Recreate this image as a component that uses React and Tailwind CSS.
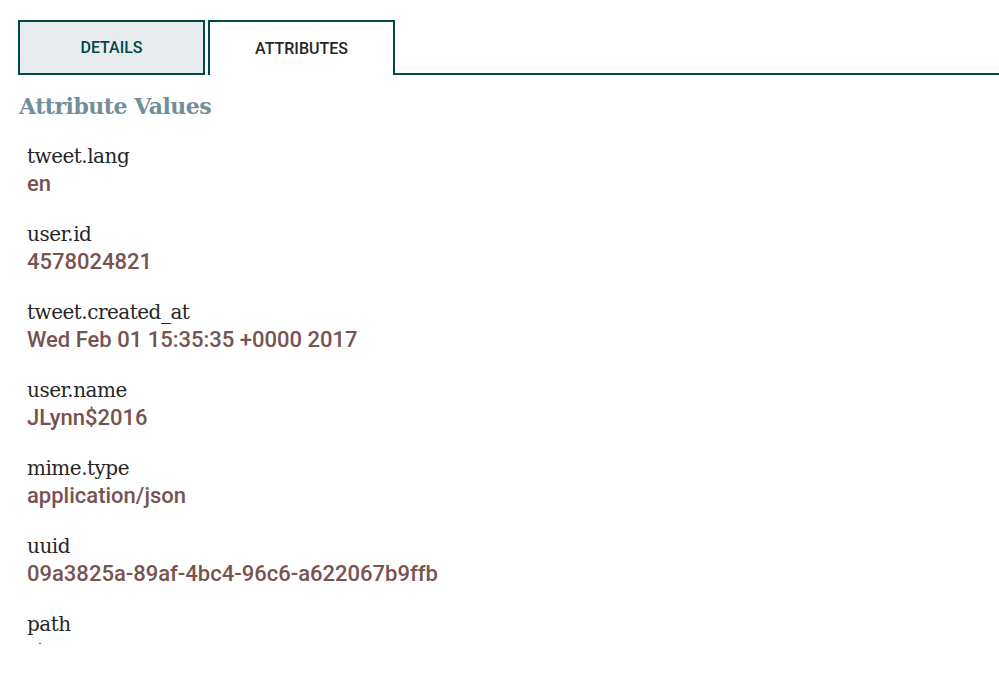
export default function App() {
  const attrs = [
    ["tweet.lang", "en"],
    ["user.id", "4578024821"],
    ["tweet.created_at", "Wed Feb 01 15:35:35 +0000 2017"],
    ["user.name", "JLynn$2016"],
    ["mime.type", "application/json"],
    ["uuid", "09a3825a-89af-4bc4-96c6-a622067b9ffb"],
    ["path", "./"],
  ];

  return (
    <div className="w-[999px] h-[674px] bg-white overflow-hidden font-['Roboto',sans-serif]">
      {/* tabs */}
      <div className="flex items-end pt-[20px] pl-[18px]">
        <div className="w-[187px] h-[55px] flex items-center justify-center bg-[#e9ecef] border-2 border-[#004849] text-[16px] font-medium text-[#004849]">
          DETAILS
        </div>
        <div className="ml-[3px] w-[187px] h-[55px] flex items-center justify-center bg-white border-2 border-b-0 border-[#004849] text-[16px] font-medium text-[#262626]">
          ATTRIBUTES
        </div>
        <div className="flex-1 border-b-2 border-[#004849]" />
      </div>

      <div className="h-[569px] overflow-hidden">
        <h2 className="pl-[19px] pt-[15px] text-[22px] font-bold text-[#728e9b] font-['DejaVu_Serif',serif] leading-[32px] tracking-[-0.5px]">
          Attribute Values
        </h2>
        <div className="pl-[27px] pt-[20px] flex flex-col gap-[22px]">
          {attrs.map(([k, v]) => (
            <div key={k}>
              <div className="text-[20px] leading-[28px] text-[#262626] font-['DejaVu_Serif',serif] tracking-[-0.5px]">
                {k}
              </div>
              <div className="text-[22px] leading-[28px] font-medium text-[#775351]">
                {v}
              </div>
            </div>
          ))}
        </div>
      </div>
    </div>
  );
}
